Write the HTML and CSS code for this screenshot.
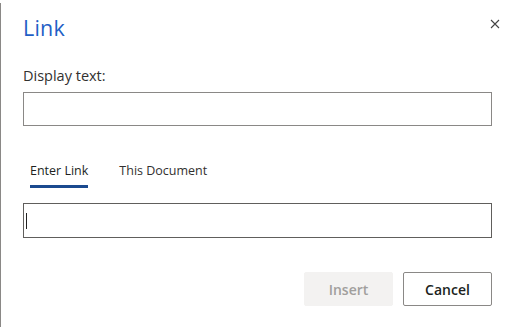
FILE: index.html
```html
<!DOCTYPE html>
<html>
<head>
<meta charset="utf-8">
<link rel="stylesheet" href="styles.css">
</head>
<body>
<div class="dialog">
  <div class="head">
    <h1 class="title">Link</h1>
    <button class="close" aria-label="Close">
      <svg width="10" height="10" viewBox="0 0 10 10"><path d="M1 1L9 9M9 1L1 9" stroke="#444" stroke-width="1.1" fill="none"/></svg>
    </button>
  </div>
  <div class="field">
    <label class="label">Display text:</label>
    <div class="input"></div>
  </div>
  <div class="tabs">
    <span class="tab active">Enter Link</span>
    <span class="tab">This Document</span>
  </div>
  <div class="input focus"><span class="caret"></span></div>
  <div class="foot">
    <button class="btn disabled">Insert</button>
    <button class="btn">Cancel</button>
  </div>
</div>
</body>
</html>
```
FILE: styles.css
```css
html, body { margin: 0; padding: 0; background: #fff; }
body { font-family: "Open Sans", "Noto Sans", sans-serif; color: #323130; }
.dialog {
  margin-top: 3px;
  height: 324px;
  box-sizing: border-box;
  border-left: 1px solid #8a8886;
  padding: 10px 14px 0 22px;
  width: 514px;
}
.head { display: flex; justify-content: space-between; align-items: flex-start; }
.title { margin: 0; font-size: 21.5px; font-weight: 400; color: #1f5fc6; line-height: 30px; letter-spacing: 0.2px; }
.close { border: 0; background: none; padding: 0; margin-top: 6px; width: 10px; height: 10px; display: block; }
.close svg { display: block; }
.field { margin-top: 23px; }
.label { display: block; font-size: 14.5px; line-height: 20px; color: #323130; margin-bottom: 6px; }
.input { height: 34px; width: 469px; box-sizing: border-box; border: 1px solid #8a8886; }
.input.focus { border-color: #605e5c; height: 35px; display: flex; align-items: center; padding-left: 2px; }
.caret { width: 1px; height: 16px; background: #222; }
.tabs { display: flex; gap: 31px; margin-top: 33px; padding-left: 7px; height: 44px; }
.tab { font-size: 12.5px; line-height: 20px; color: #323130; padding-top: 2px; height: 24px; }
.tab.active { border-bottom: 3px solid #1b4a8f; height: 24px; color: #201f1e; }
.foot { display: flex; justify-content: flex-end; gap: 10px; margin-top: 34px; padding-right: 1px; width: 469px; }
.btn { width: 89px; height: 34px; box-sizing: border-box; border: 1px solid #8a8886; border-radius: 2px; background: #fff; font-family: inherit; font-size: 14px; font-weight: 600; color: #201f1e; padding: 0; }
.btn.disabled { background: #f3f2f1; border-color: #f3f2f1; color: #a19f9d; }
```
